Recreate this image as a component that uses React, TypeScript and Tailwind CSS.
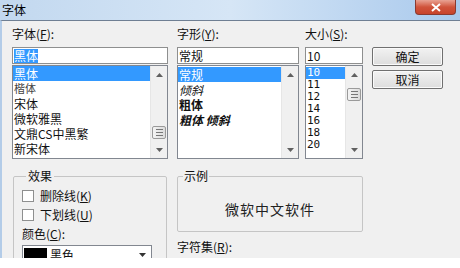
import React from 'react';

const U = ({ c }: { c: string }) => <span className="underline underline-offset-1">{c}</span>;

const Arrow = ({ down }: { down?: boolean }) => (
  <div className="h-[17px] flex items-center justify-center">
    <svg width="7" height="4" viewBox="0 0 7 4">
      {down ? <path d="M0 0h7L3.5 4z" fill="#606060" /> : <path d="M0 4h7L3.5 0z" fill="#606060" />}
    </svg>
  </div>
);

const ScrollBar = ({ thumb }: { thumb?: string }) => (
  <div className="w-[17px] h-full flex flex-col bg-[#f0f0f0] border-l border-[#e6e6e6]">
    <Arrow />
    <div className="flex-1 px-[1px]">
      {thumb && (
        <div className={`${thumb} h-[13px] rounded-[2px] border border-[#9a9a9a] bg-gradient-to-r from-[#f4f4f4] to-[#dcdcdc] flex flex-col items-center justify-center gap-[2px]`}>
          <div className="w-[7px] h-px bg-[#777]" />
          <div className="w-[7px] h-px bg-[#777]" />
          <div className="w-[7px] h-px bg-[#777]" />
        </div>
      )}
    </div>
    <Arrow down />
  </div>
);

const Label = ({ text, k }: { text: string; k: string }) => (
  <div className="h-[16px] leading-[16px] text-[12px] text-[#111]">
    {text}(<U c={k} />):
  </div>
);

const Input = ({ value, selected }: { value: string; selected?: boolean }) => (
  <div className="mt-[5px] h-[17px] bg-white border border-[#8e8f8f] flex items-center pl-[1px] text-[12px] leading-[14px] text-[#111]">
    <span className={selected ? 'bg-[#3399ff] text-white' : ''}>{value}</span>
  </div>
);

const fonts = ['黑体', '楷体', '宋体', '微软雅黑', '文鼎CS中黑繁', '新宋体'];
const sizes = ['10', '11', '12', '14', '16', '18', '20'];

export default function App() {
  return (
    <div className="w-[460px] h-[268px] bg-white overflow-hidden" style={{ fontFamily: '"Noto Sans CJK SC", "Liberation Sans", sans-serif' }}>
      <div className="relative h-[20px] bg-gradient-to-r from-[#c2d8ef] via-[#d6e6f6] to-[#a9c9ec]">
        <div className="pl-[2px] leading-[20px] text-[12px] text-black">字体</div>
        <div className="absolute right-[4px] top-0 w-[41px] h-[15px] rounded-b-[4px] border border-[#8a3a30] border-t-0 bg-gradient-to-b from-[#e8a293] via-[#d0533b] to-[#c7432b] flex items-center justify-center">
          <svg width="10" height="9" viewBox="0 0 10 9">
            <path d="M1 1l8 7M9 1L1 8" stroke="white" strokeWidth="2" />
          </svg>
        </div>
      </div>

      <div className="h-[238px] overflow-hidden bg-[#f0f0f0] border-t border-[#6f7f93] border-l-2 border-l-[#b3cce8]">
        <div className="flex pl-[10px] pt-[5px]">
          <div className="w-[156px]">
            <Label text="字体" k="F" />
            <Input value="黑体" selected />
            <div className="mt-px h-[94px] bg-white border border-[#828790] flex">
              <div className="flex-1 text-[12px] text-[#111]">
                {fonts.map((f, i) => (
                  <div key={f} className={`h-[15px] leading-[15px] pl-px ${i === 0 ? 'bg-[#3399ff] text-white' : ''} ${i === 1 ? 'text-[11px] text-[#444]' : ''}`}>
                    {f}
                  </div>
                ))}
              </div>
              <ScrollBar thumb="mt-[43px]" />
            </div>
          </div>

          <div className="w-[122px] ml-[9px]">
            <Label text="字形" k="Y" />
            <Input value="常规" />
            <div className="mt-px h-[94px] bg-white border border-[#828790] flex">
              <div className="flex-1 text-[12px] text-[#111] pt-px">
                <div className="h-[15px] leading-[15px] pl-px bg-[#3399ff] text-white">常规</div>
                <div className="h-[15px] leading-[15px] pl-px italic">倾斜</div>
                <div className="h-[15px] leading-[15px] pl-px font-bold">粗体</div>
                <div className="h-[15px] leading-[15px] pl-px font-bold italic">粗体 倾斜</div>
              </div>
              <ScrollBar />
            </div>
          </div>

          <div className="w-[58px] ml-[6px]">
            <Label text="大小" k="S" />
            <Input value="10" />
            <div className="mt-px h-[94px] bg-white border border-[#828790] flex">
              <div className="flex-1 text-[11px] text-[#111] pt-px" style={{ fontFamily: '"DejaVu Sans Mono", monospace' }}>
                {sizes.map((s, i) => (
                  <div key={s} className={`h-[12px] leading-[12px] pl-px ${i === 0 ? 'bg-[#3399ff] text-white' : ''}`}>
                    {s}
                  </div>
                ))}
              </div>
              <ScrollBar thumb="mt-[5px]" />
            </div>
          </div>

          <div className="w-[71px] ml-[9px] pt-[21px] flex flex-col gap-[4px]">
            <button className="h-[19px] border border-[#707070] rounded-[2px] bg-gradient-to-b from-[#f2f2f2] to-[#dddddd] text-[12px] text-[#111] shadow-[inset_0_0_0_1px_#fafafa]">确定</button>
            <button className="h-[19px] border border-[#707070] rounded-[2px] bg-gradient-to-b from-[#f2f2f2] to-[#dddddd] text-[12px] text-[#111] shadow-[inset_0_0_0_1px_#fafafa]">取消</button>
          </div>
        </div>

        <div className="flex pl-[11px] mt-[9px]">
          <fieldset className="w-[154px] h-[100px] border border-[#c5c5c5] rounded-[2px] px-[8px]">
            <legend className="px-[2px] ml-[4px] text-[12px] leading-[16px] text-[#111]">效果</legend>
            <div className="mt-[3px] flex items-center h-[18px] text-[12px] text-[#111]">
              <div className="w-[12px] h-[12px] bg-white border border-[#8e8f8f] mr-[6px]" />
              删除线(<U c="K" />)
            </div>
            <div className="mt-[1px] flex items-center h-[18px] text-[12px] text-[#111]">
              <div className="w-[12px] h-[12px] bg-white border border-[#8e8f8f] mr-[6px]" />
              下划线(<U c="U" />)
            </div>
            <div className="mt-[2px] h-[16px] leading-[16px] text-[12px] text-[#111]">
              颜色(<U c="C" />):
            </div>
            <div className="mt-[3px] h-[20px] w-[130px] bg-white border border-[#828790] flex items-center pl-px text-[12px] text-[#111]">
              <div className="w-[23px] h-[14px] bg-black mr-[3px]" />
              黑色
              <div className="ml-auto mr-[5px]">
                <svg width="7" height="4" viewBox="0 0 7 4"><path d="M0 0h7L3.5 4z" fill="#333" /></svg>
              </div>
            </div>
          </fieldset>

          <div className="ml-[10px] w-[186px]">
            <fieldset className="h-[64px] border border-[#c5c5c5] rounded-[2px] flex">
              <legend className="px-[1px] ml-[5px] text-[12px] leading-[16px] text-[#111]">示例</legend>
              <div className="w-full pt-[15px] text-center text-[14px] tracking-[1px] text-[#222]">微软中文软件</div>
            </fieldset>
            <div className="mt-[7px] h-[16px] leading-[16px] text-[12px] text-[#111]">
              字符集(<U c="R" />):
            </div>
          </div>
        </div>
      </div>
    </div>
  );
}
